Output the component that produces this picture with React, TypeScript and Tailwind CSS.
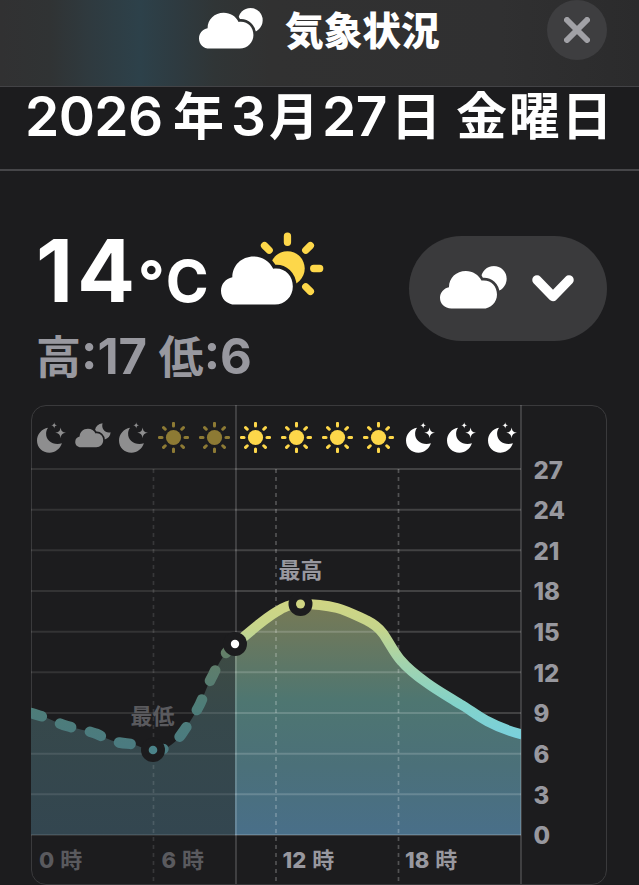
import { useId } from 'react'

const cloudPath =
  'M33 123C13 123 0 109 0 92C0 76 11 64 26 61C26 34 47 14 75 14C95 14 112 25 120 42C146 38 165 57 165 82C165 105 147 123 124 123Z'

const hours = [
  'moon',
  'cloudMoon',
  'moon',
  'sun',
  'sun',
  'sun',
  'sun',
  'sun',
  'sun',
  'moon',
  'moon',
  'moon',
]

const ticks = [27, 24, 21, 18, 15, 12, 9, 6, 3, 0]

const fallingCurve =
  'M31 713C37 715 41 716 47 718C54 721 60 724 67 726C77 729 86 730 97 734C107 739 116 743 127 743.5C138 744 143 750 153 750.5'
const risingCurve =
  'C168 751 177 741 183 732C190 722 195 714 200 704C205 693 207 686 213 675C219 662 226 651 235 644'
const futureCurve =
  'C248 634 261 621 276 612C284 607 290 604 300 604C313 604 325 605 337 608C348 611 357 616 367 620.5C374 624 379 628 383 633.5C389 642 393 651 400 659.5C408 669 417 676 427 683C438 691 449 697 460 704C469 709 477 716 487 721C498 727 509 731 522 734.5'

function Clouds({ className }: { className: string }) {
  const id = useId()
  return (
    <svg viewBox="0 0 194 124" className={className} fill="white">
      <mask id={id}>
        <rect width="194" height="124" fill="white" />
        <path d={cloudPath} fill="black" stroke="black" strokeWidth="16" />
      </mask>
      <path d={cloudPath} />
      <circle cx="156" cy="37" r="37" mask={`url(#${id})`} />
    </svg>
  )
}

function CloudSun({ className }: { className: string }) {
  const id = useId()
  return (
    <svg viewBox="0 0 310 218" className={className}>
      <mask id={id}>
        <rect width="310" height="218" fill="white" />
        <path
          d={cloudPath}
          transform="translate(0 54) scale(1.31 1.33)"
          fill="black"
          stroke="black"
          strokeWidth="17"
        />
      </mask>
      <path d={cloudPath} transform="translate(0 54) scale(1.31 1.33)" fill="white" />
      <circle cx="200" cy="109" r="52" fill="#fdd74a" mask={`url(#${id})`} />
      <path
        d="M200 12V30M131 40L145 54M269 40L255 54M279 109H297M255 164L269 178"
        stroke="#fdd74a"
        strokeWidth="22"
        strokeLinecap="round"
      />
    </svg>
  )
}

function Sun() {
  return (
    <svg viewBox="-46 -46 92 92" className="h-[31px] w-[31px]" fill="#fdd74a">
      <circle r="22.5" />
      <path
        d="M0 -42V-34M0 42V34M-42 0H-34M42 0H34M-29.5 -29.5L-24.5 -24.5M29.5 -29.5L24.5 -24.5M-29.5 29.5L-24.5 24.5M29.5 29.5L24.5 24.5"
        stroke="#fdd74a"
        strokeWidth="9"
        strokeLinecap="round"
      />
    </svg>
  )
}

function Moon() {
  return (
    <svg viewBox="0 0 86 92" className="ml-[3px] h-[31px] w-[29px]" fill="white">
      <path d="M33 17C14 20 0 36 0 55C0 76 16 91 37 91C54 91 68 80 74 63C50 71 26 56 27 34C27 28 29 22 33 17Z" />
      <path d="M70 16C72 27 75 30 86 32C75 34 72 37 70 48C68 37 65 34 54 32C65 30 68 27 70 16Z" />
      <path d="M51 1C52 8 54 9 60 10C54 11 52 13 51 19C50 13 48 11 42 10C48 9 50 8 51 1Z" />
    </svg>
  )
}

function CloudMoon() {
  const id = useId()
  return (
    <svg viewBox="0 0 108 76" className="-mt-1 ml-[4px] h-[25px] w-9" fill="white">
      <mask id={id}>
        <rect width="108" height="76" fill="white" />
        <path
          d={cloudPath}
          transform="translate(0 10) scale(.515)"
          fill="black"
          stroke="black"
          strokeWidth="20"
        />
      </mask>
      <path d={cloudPath} transform="translate(0 10) scale(.515)" />
      <path
        d="M83 1C70 3 62 10 60 22L70 48L88 51C100 47 107 39 108 28C94 33 78 20 83 1Z"
        mask={`url(#${id})`}
      />
    </svg>
  )
}

function HourIcon({ name }: { name: string }) {
  return (
    <div className="flex w-[40.9px] shrink-0 items-center justify-center">
      {name === 'sun' && <Sun />}
      {name === 'moon' && <Moon />}
      {name === 'cloudMoon' && <CloudMoon />}
    </div>
  )
}

function Chart() {
  return (
    <svg
      viewBox="31 469 490 366"
      className="block h-[366px] w-[490px] overflow-visible"
      fill="none"
    >
      <defs>
        <linearGradient id="line" gradientUnits="userSpaceOnUse" x1="0" y1="600" x2="0" y2="740">
          <stop offset="0" stopColor="#d0d583" />
          <stop offset=".2" stopColor="#c6d58b" />
          <stop offset=".45" stopColor="#a3d3ad" />
          <stop offset=".75" stopColor="#82d2ca" />
          <stop offset="1" stopColor="#79d0de" />
        </linearGradient>
        <linearGradient id="pastLine" gradientUnits="userSpaceOnUse" x1="0" y1="645" x2="0" y2="745">
          <stop offset="0" stopColor="#667f66" />
          <stop offset=".3" stopColor="#5b7d6e" />
          <stop offset=".6" stopColor="#4e7d78" />
          <stop offset="1" stopColor="#4b7b80" />
        </linearGradient>
        <linearGradient id="area" gradientUnits="userSpaceOnUse" x1="0" y1="604" x2="0" y2="835">
          <stop offset="0" stopColor="#777a55" />
          <stop offset=".15" stopColor="#69785f" />
          <stop offset=".42" stopColor="#4e7671" />
          <stop offset=".7" stopColor="#4b7079" />
          <stop offset="1" stopColor="#496f89" />
        </linearGradient>
        <linearGradient id="pastArea" gradientUnits="userSpaceOnUse" x1="0" y1="645" x2="0" y2="835">
          <stop offset="0" stopColor="#3e4b43" />
          <stop offset=".4" stopColor="#36484b" />
          <stop offset="1" stopColor="#334650" />
        </linearGradient>
        <clipPath id="past">
          <rect x="31" y="469" width="204" height="366" />
        </clipPath>
        <clipPath id="future">
          <rect x="235" y="469" width="286" height="366" />
        </clipPath>
      </defs>

      <path d={`${fallingCurve}${risingCurve}V835H31Z`} fill="url(#pastArea)" />
      <path
        d={`${fallingCurve}${risingCurve}${futureCurve}V835H31Z`}
        fill="url(#area)"
        clipPath="url(#future)"
      />

      {ticks.map((tick) => {
        const y = 835 - (tick * 366) / 27
        return (
          <g key={tick} stroke="white" strokeWidth="2">
            <path d={`M31 ${y}H235`} strokeOpacity=".1" />
            <path d={`M235 ${y}H521`} strokeOpacity=".17" />
          </g>
        )
      })}
      <g stroke="white" strokeWidth="1.7" strokeDasharray="4 4">
        <path d="M153.5 469V884" strokeOpacity=".12" />
        <path d="M276 469V884" strokeOpacity=".24" />
        <path d="M398.5 469V884" strokeOpacity=".24" />
      </g>
      <path d="M236 405V884M521 405V884" stroke="white" strokeOpacity=".19" strokeWidth="1.7" />

      <g stroke="url(#pastLine)" strokeWidth="10.5" strokeLinecap="round" clipPath="url(#past)">
        <path d={fallingCurve} strokeDasharray="11.5 19.5" />
        <path d={`M153 750.5${risingCurve}`} strokeDasharray="11.5 20.5" strokeDashoffset="1" />
      </g>
      <path
        d={`${fallingCurve}${risingCurve}${futureCurve}`}
        stroke="url(#line)"
        strokeWidth="10"
        clipPath="url(#future)"
      />

      <circle cx="153" cy="750" r="12" fill="#1c1c1e" />
      <circle cx="153" cy="750" r="4.3" fill="#4b8389" />
      <circle cx="235" cy="644" r="12" fill="#1c1c1e" />
      <circle cx="235" cy="644" r="4.2" fill="white" />
      <circle cx="300.5" cy="604" r="12" fill="#1c1c1e" />
      <circle cx="300.5" cy="604" r="4.5" fill="#d0d583" />

      <g className="text-[22px] font-bold">
        <text x="130.5" y="724" fill="#5a5a5e">
          最低
        </text>
        <text x="278.5" y="578" fill="#98989f">
          最高
        </text>
      </g>
    </svg>
  )
}

export default function App() {
  return (
    <div
      lang="ja"
      className="h-[885px] w-[639px] overflow-hidden bg-[#1c1c1e] font-['Inter','Noto_Sans_CJK_JP',sans-serif] text-white"
    >
      <header className="flex h-[87px] items-start border-b border-[#434346] bg-[linear-gradient(90deg,#313132_0,#303334_50px,#2f3a3f_90px,#2d414a_140px,#2e3b41_175px,#303536_215px,#313131_270px,#303031_500px,#2b2b2c_639px)]">
        <Clouds className="mt-2 ml-[199px] h-[41px] w-16 shrink-0" />
        <h1 className="ml-[22px] w-[160px] text-[38.7px] leading-[62px] font-black whitespace-nowrap">
          気象状況
        </h1>
        <button className="ml-[102px] flex h-[60px] w-[60px] items-center justify-center rounded-full bg-[#3e3e40]">
          <svg
            viewBox="0 0 26 26"
            className="h-[26px] w-[26px]"
            stroke="#a1a1a6"
            strokeWidth="6"
            strokeLinecap="round"
          >
            <path d="M3 3L23 23M23 3L3 23" />
          </svg>
        </button>
      </header>

      <div className="flex h-[84px] items-start border-b-2 border-[#464649] pl-[25px] text-[55px] leading-[58px] font-semibold whitespace-nowrap">
        <span className="w-[148px] tracking-[-0.6px]">2026</span>
        <span className="w-[58px] text-[51px] leading-[60px]">年</span>
        <span className="w-[38px]">3</span>
        <span className="w-[53px] text-[50px] leading-[60px]">月</span>
        <span className="w-[69px] tracking-[-0.6px]">27</span>
        <span className="w-[65px] text-[50px] leading-[60px]">日</span>
        <span className="text-[51px] leading-[60px] tracking-[1.7px]">金曜日</span>
      </div>

      <section className="flex h-[234px] justify-between pr-8 pl-9">
        <div className="pt-[61px]">
          <div className="flex items-start">
            <div className="flex h-[84px] w-[185px] items-baseline leading-[78px] font-bold whitespace-nowrap">
              <span className="w-[102px] text-[86px] tracking-[4px]">14</span>
              <span className="text-[58px] tracking-[2px]">°C</span>
            </div>
            <CloudSun className="h-[73px] w-[103px]" />
          </div>
          <p className="mt-[13px] text-[49px] leading-[56px] font-bold whitespace-nowrap text-[#98989f]">
            <span className="text-[45px]">高</span>:17 <span className="text-[45px]">低</span>:6
          </p>
        </div>
        <button className="mt-[65px] flex h-[105px] w-[198px] items-center rounded-full bg-[#3a3a3c] pl-[31px]">
          <Clouds className="-mt-[2px] h-[43px] w-[67px]" />
          <svg
            viewBox="0 0 42 27"
            className="ml-[25px] h-[27px] w-[42px]"
            fill="none"
            stroke="white"
            strokeWidth="9.5"
            strokeLinecap="round"
            strokeLinejoin="round"
          >
            <path d="M5 5L21 21.5L37 5" />
          </svg>
        </button>
      </section>

      <section className="ml-[31px] flex h-[480px] w-[576px] rounded-[15px] border border-[#3a3a3c]">
        <div className="-ml-px w-[490px] shrink-0">
          <div className="flex h-[62px]">
            <div className="-ml-px flex opacity-50">
              {hours.slice(0, 5).map((name, i) => (
                <HourIcon key={i} name={name} />
              ))}
            </div>
            <div className="ml-px flex">
              {hours.slice(5).map((name, i) => (
                <HourIcon key={i} name={name} />
              ))}
            </div>
          </div>
          <div className="pt-px">
            <Chart />
          </div>
          <div className="grid grid-cols-4 text-[22px] leading-[50px] font-extrabold text-[#98989f]">
            {['0', '6', '12', '18'].map((hour, i) => (
              <div key={hour} className={i < 2 ? 'pl-2 text-[#5a5a5e]' : 'pl-[6.5px]'}>
                {hour}
                <span className="ml-[6px] font-bold">時</span>
              </div>
            ))}
          </div>
        </div>
        <ul className="mt-[44.5px] ml-[12.5px] text-2xl font-extrabold text-[#98989f]">
          {ticks.map((tick) => (
            <li key={tick} className="h-[40.67px] leading-[40.67px]">
              {tick}
            </li>
          ))}
        </ul>
      </section>
    </div>
  )
}
